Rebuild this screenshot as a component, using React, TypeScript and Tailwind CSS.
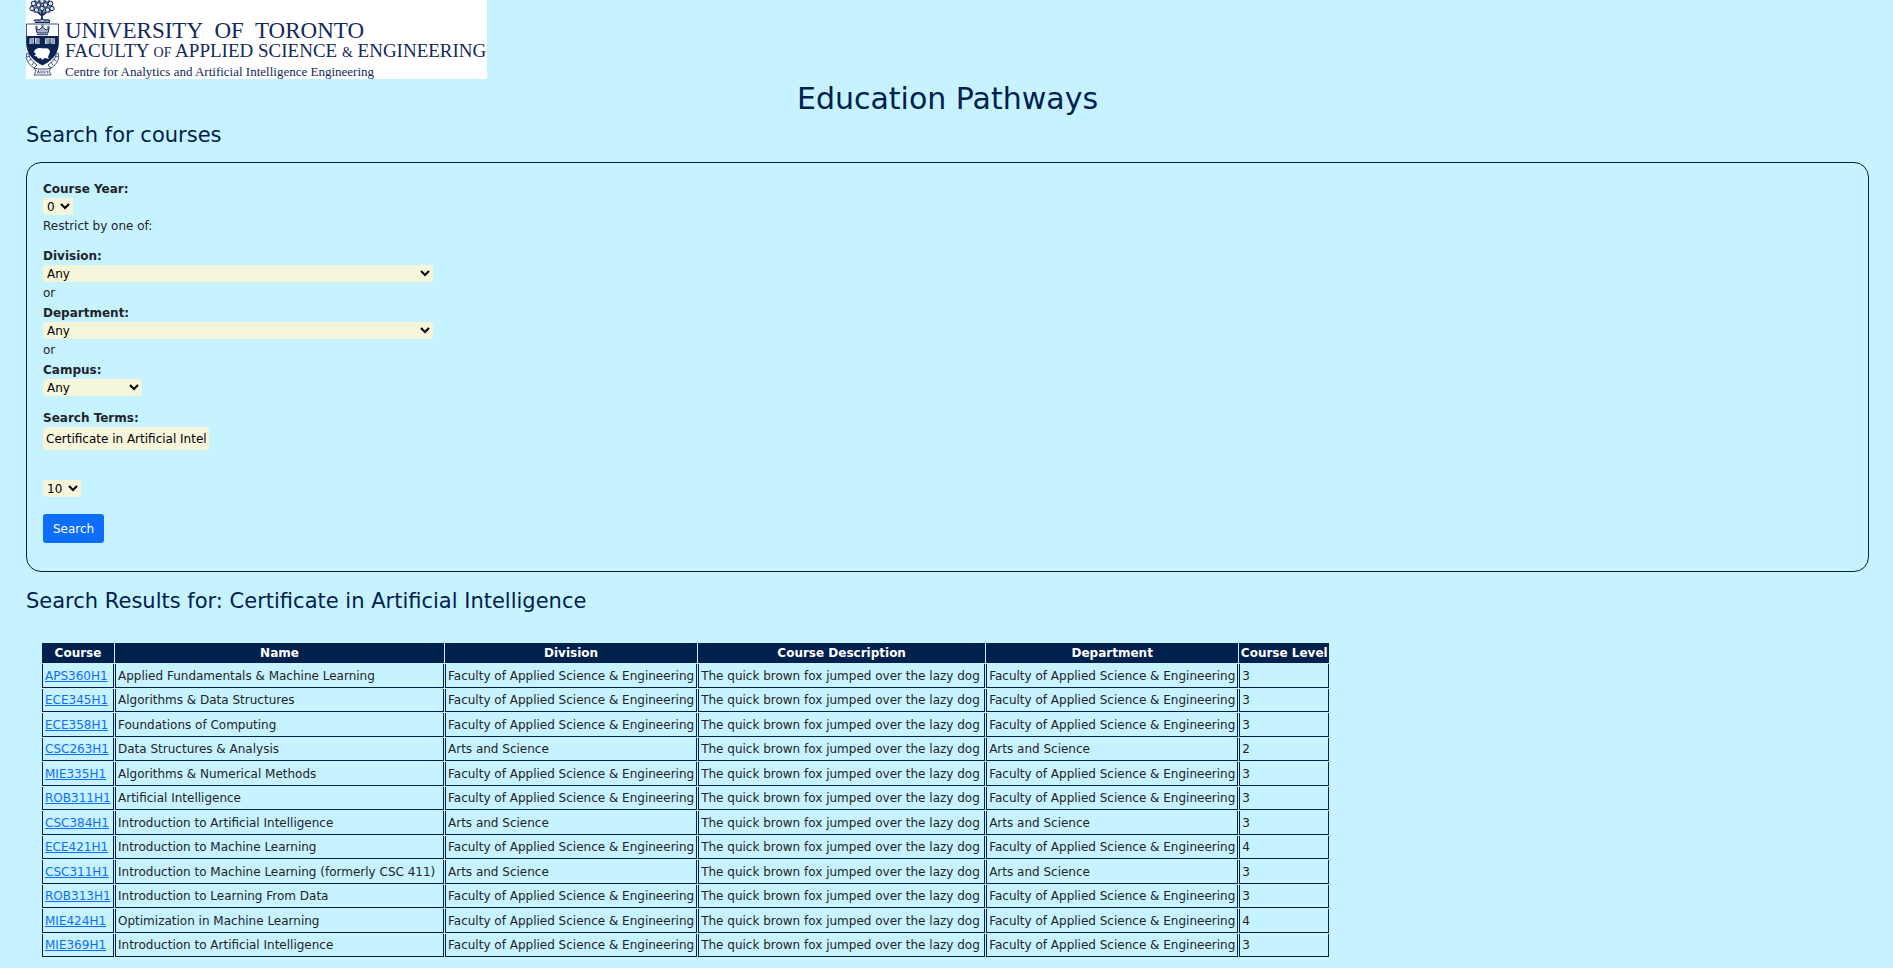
const courses = [
  { code: 'APS360H1', name: 'Applied Fundamentals & Machine Learning', faculty: 'Faculty of Applied Science & Engineering', level: 3 },
  { code: 'ECE345H1', name: 'Algorithms & Data Structures', faculty: 'Faculty of Applied Science & Engineering', level: 3 },
  { code: 'ECE358H1', name: 'Foundations of Computing', faculty: 'Faculty of Applied Science & Engineering', level: 3 },
  { code: 'CSC263H1', name: 'Data Structures & Analysis', faculty: 'Arts and Science', level: 2 },
  { code: 'MIE335H1', name: 'Algorithms & Numerical Methods', faculty: 'Faculty of Applied Science & Engineering', level: 3 },
  { code: 'ROB311H1', name: 'Artificial Intelligence', faculty: 'Faculty of Applied Science & Engineering', level: 3 },
  { code: 'CSC384H1', name: 'Introduction to Artificial Intelligence', faculty: 'Arts and Science', level: 3 },
  { code: 'ECE421H1', name: 'Introduction to Machine Learning', faculty: 'Faculty of Applied Science & Engineering', level: 4 },
  { code: 'CSC311H1', name: 'Introduction to Machine Learning (formerly CSC 411)', faculty: 'Arts and Science', level: 3 },
  { code: 'ROB313H1', name: 'Introduction to Learning From Data', faculty: 'Faculty of Applied Science & Engineering', level: 3 },
  { code: 'MIE424H1', name: 'Optimization in Machine Learning', faculty: 'Faculty of Applied Science & Engineering', level: 4 },
  { code: 'MIE369H1', name: 'Introduction to Artificial Intelligence', faculty: 'Faculty of Applied Science & Engineering', level: 3 },
];

const columns = [
  { title: 'Course', width: 'w-[72px]' },
  { title: 'Name', width: 'w-[329px]' },
  { title: 'Division', width: 'w-[252px]' },
  { title: 'Course Description', width: 'w-[287px]' },
  { title: 'Department', width: 'w-[252px]' },
  { title: 'Course Level', width: 'w-[90px]' },
];

const selectClass = 'block h-[17px] rounded-[3px] bg-[#f5f5dc] text-black';
const labelClass = 'block font-bold leading-[18px]';
const cellClass = 'whitespace-nowrap border-x border-b border-[#00204e] px-[2px] py-0';

function Crest() {
  return (
    <svg viewBox="0 0 34 76" className="h-[76px] w-[34px] shrink-0" fill="none" stroke="#12295a" aria-hidden="true">
      {/* oak tree */}
      <path d="M6 1h20l2 8-4 4H8L4 9z" fill="#8a97b3" stroke="none" />
      <g strokeWidth="1" fill="#dfe4ee">
        <circle cx="11" cy="0" r="2.200" />
        <circle cx="16" cy="1" r="2.300" />
        <circle cx="21" cy="0" r="2.200" />
        <circle cx="7.500" cy="3.500" r="2.300" />
        <circle cx="24.500" cy="3.500" r="2.300" />
        <circle cx="12.500" cy="5" r="2.200" />
        <circle cx="19.500" cy="5" r="2.200" />
        <circle cx="6" cy="8.500" r="2.200" />
        <circle cx="26" cy="8.500" r="2.200" />
        <circle cx="16" cy="8.500" r="2.200" />
        <circle cx="10.500" cy="10" r="2.200" />
        <circle cx="21.500" cy="10" r="2.200" />
      </g>
      <path d="M16 11v8M12 12.500l4 3 4-3" strokeWidth="1.800" />
      <path d="M8 21c3-3 5 1 8-2 3 3 5-1 8 2M9 22.300h15" strokeWidth="1.400" />
      {/* shield */}
      <path d="M.5 24h32v18c0 11-7 19-16 23C7.500 61 .5 53 .5 42z" fill="#fff" strokeWidth=".8" />
      <path d="M.5 36h32v7c0 11-7 18-16 22C7.500 61 .5 54 .5 43z" fill="#0b2353" stroke="none" />
      {/* crown */}
      <path d="M11 33l-1-5 3 2 3.500-3 3.500 3 3-2-1 5z" fill="#aab4c9" strokeWidth="1" />
      <path d="M11 34.700h11" strokeWidth="1" />
      <circle cx="10.500" cy="27" r=".9" strokeWidth=".8" />
      <circle cx="16.500" cy="25.800" r=".9" strokeWidth=".8" />
      <circle cx="22.500" cy="27" r=".9" strokeWidth=".8" />
      {/* books */}
      <path
        d="M3.500 38.500l4.500-.5v5.500l-4.500.5zM9 38l4.500.5V44L9 43.500zM19 38.500l4.500-.5v5.500L19 44zM24.500 38l4.500.5V44l-4.500-.5z"
        fill="#cfd6e4"
        stroke="none"
      />
      <path d="M4.500 40h3M4.500 42h3M10 40h3M10 42h3M20 40h3M20 42h3M25.500 40h3M25.500 42h3" strokeWidth=".7" />
      {/* beaver */}
      <path d="M8 52c0-2 3-4 6-4l4 .5c3-1 6 .5 6 3.500l-2 5 1 2-4-1-3 2-1-2-3 .5-1-2-3-.5 2-2z" fill="#fff" stroke="none" />
      {/* motto ribbon */}
      <g strokeWidth=".8">
        <path d="M1 53c-2 6 1 11 7 15l3-3C6 61 3 58 3 54zM32 53c2 6-1 11-7 15l-3-3c5-4 8-7 8-11z" fill="#fff" />
        <path d="M1 57l3-1M2.500 61l3-2M6 65l2-3M32 57l-3-1M30.500 61l-3-2M27 65l-2-3" />
        <path d="M8 68l2 3-2 4h17l-2-4 2-3-4 1h-9z" fill="#fff" />
        <path d="M11.500 73.500l1-3 1 3M15 70.500v3M17 70.500v3M19 70.500v3M21 70.500l1 3" />
      </g>
    </svg>
  );
}

function Logo() {
  return (
    <div className="flex h-[79px] w-[461px] items-start overflow-hidden bg-white text-[#12295a]">
      <Crest />
      <div className="ml-[5px] flex flex-col whitespace-nowrap pt-5 font-['Liberation_Serif',serif]">
        <span className="text-[23px] leading-[21px]">UNIVERSITY&nbsp; OF&nbsp; TORONTO</span>
        <span className="text-[19px] leading-[20px]">
          FACULTY <span className="text-[14px]">OF</span> APPLIED SCIENCE <span className="text-[14px]">&amp;</span> ENGINEERING
        </span>
        <span className="text-[13px] leading-[18px]">Centre for Analytics and Artificial Intelligence Engineering</span>
      </div>
    </div>
  );
}

export default function App() {
  return (
    <div className="min-h-screen bg-[#c7f2ff] pr-6 pb-[11px] pl-[26px] font-['DejaVu_Sans',sans-serif] text-[12px] text-[#212529]">
      <header>
        <Logo />
        <h1 className="text-center text-[30px] leading-[40px] text-[#00204e]">Education Pathways</h1>
      </header>
      <main>
        <h2 className="mb-[11px] text-[21px] leading-[32px] text-[#00204e]">Search for courses</h2>
        <form
          className="rounded-[15px] border border-[#00204e] px-4 pt-[17px] pb-[28px]"
          onSubmit={(event) => event.preventDefault()}
        >
          <label htmlFor="year" className={labelClass}>Course Year:</label>
          <select id="year" className={`${selectClass} w-[30px]`}>
            <option>0</option>
          </select>
          <p className="leading-[22px]">Restrict by one of:</p>
          <label htmlFor="division" className={`${labelClass} mt-[10px]`}>Division:</label>
          <select id="division" className={`${selectClass} w-[390px]`}>
            <option>Any</option>
          </select>
          <p className="leading-[22px]">or</p>
          <label htmlFor="department" className={labelClass}>Department:</label>
          <select id="department" className={`${selectClass} w-[390px]`}>
            <option>Any</option>
          </select>
          <p className="leading-[22px]">or</p>
          <label htmlFor="campus" className={labelClass}>Campus:</label>
          <select id="campus" className={`${selectClass} w-[99px]`}>
            <option>Any</option>
          </select>
          <label htmlFor="terms" className={`${labelClass} mt-[13px]`}>Search Terms:</label>
          <input
            id="terms"
            type="text"
            defaultValue="Certificate in Artificial Intelligence"
            className="block h-[23px] w-[166px] rounded-[3px] bg-[#f5f5dc] px-[3px] text-black"
          />
          <select aria-label="Number of results" className={`${selectClass} mt-[30px] w-[38px]`}>
            <option>10</option>
          </select>
          <button type="submit" className="mt-[17px] block h-[29px] w-[61px] rounded-[3px] bg-[#0d6efd] text-white">
            Search
          </button>
        </form>
        <h2 className="mt-[13px] mb-[25px] text-[21px] leading-[32px] text-[#00204e]">
          Search Results for: Certificate in Artificial Intelligence
        </h2>
        <table className="ml-[15px] border-separate border-spacing-[1px]">
          <thead>
            <tr className="h-5 text-white">
              {columns.map((column) => (
                <th key={column.title} className={`${column.width} whitespace-nowrap bg-[#00204e] p-0 text-center font-bold`}>
                  {column.title}
                </th>
              ))}
            </tr>
          </thead>
          <tbody>
            {courses.map((course) => (
              <tr key={course.code} className="odd:h-6 even:h-[23px]">
                <td className={cellClass}>
                  <a href={`#${course.code}`} className="text-[#0d6efd] underline">{course.code}</a>
                </td>
                <td className={cellClass}>{course.name}</td>
                <td className={cellClass}>{course.faculty}</td>
                <td className={cellClass}>The quick brown fox jumped over the lazy dog</td>
                <td className={cellClass}>{course.faculty}</td>
                <td className={cellClass}>{course.level}</td>
              </tr>
            ))}
          </tbody>
        </table>
      </main>
    </div>
  );
}
